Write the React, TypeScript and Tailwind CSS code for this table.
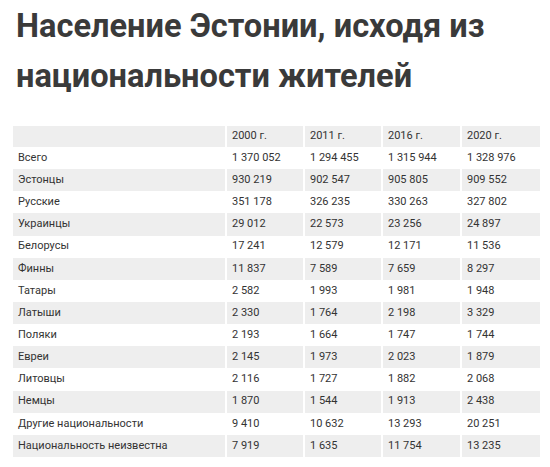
import React from 'react';

const rows: [string, string, string, string, string][] = [
  ['Всего', '1 370 052', '1 294 455', '1 315 944', '1 328 976'],
  ['Эстонцы', '930 219', '902 547', '905 805', '909 552'],
  ['Русские', '351 178', '326 235', '330 263', '327 802'],
  ['Украинцы', '29 012', '22 573', '23 256', '24 897'],
  ['Белорусы', '17 241', '12 579', '12 171', '11 536'],
  ['Финны', '11 837', '7 589', '7 659', '8 297'],
  ['Татары', '2 582', '1 993', '1 981', '1 948'],
  ['Латыши', '2 330', '1 764', '2 198', '3 329'],
  ['Поляки', '2 193', '1 664', '1 747', '1 744'],
  ['Евреи', '2 145', '1 973', '2 023', '1 879'],
  ['Литовцы', '2 116', '1 727', '1 882', '2 068'],
  ['Немцы', '1 870', '1 544', '1 913', '2 438'],
  ['Другие национальности', '9 410', '10 632', '13 293', '20 251'],
  ['Национальность неизвестна', '7 919', '1 635', '11 754', '13 235'],
];

const years = ['2000 г.', '2011 г.', '2016 г.', '2020 г.'];

export default function App() {
  return (
    <div className="w-[550px] h-[467px] bg-white overflow-hidden" style={{ fontFamily: 'Roboto, "Liberation Sans", sans-serif' }}>
      <h1 className="pl-[16px] mt-[1px] text-[32.6px] leading-[50px] font-bold text-[#3a3a3a]">
        Население Эстонии, исходя из<br />национальности жителей
      </h1>

      <table className="ml-[11px] mt-[25px] border-separate border-spacing-x-[2px] border-spacing-y-0 text-[11px] text-[#333]">
        <colgroup>
          <col className="w-[212px]" />
          <col className="w-[76px]" />
          <col className="w-[76px]" />
          <col className="w-[77px]" />
          <col className="w-[78px]" />
        </colgroup>
        <thead>
          <tr className="bg-[#eeeeee] h-[21px]">
            <th className="font-normal" />
            {years.map((y) => (
              <th key={y} className="text-left font-normal pl-[5px]">{y}</th>
            ))}
          </tr>
        </thead>
        <tbody>
          {rows.map((r, i) => (
            <tr key={r[0]} className={`h-[22.15px] ${i % 2 === 1 ? 'bg-[#eeeeee]' : 'bg-white'}`}>
              <td className="pl-[5px]">{r[0]}</td>
              {r.slice(1).map((v, j) => (
                <td key={j} className="pl-[5px]">{v}</td>
              ))}
            </tr>
          ))}
        </tbody>
      </table>
    </div>
  );
}
